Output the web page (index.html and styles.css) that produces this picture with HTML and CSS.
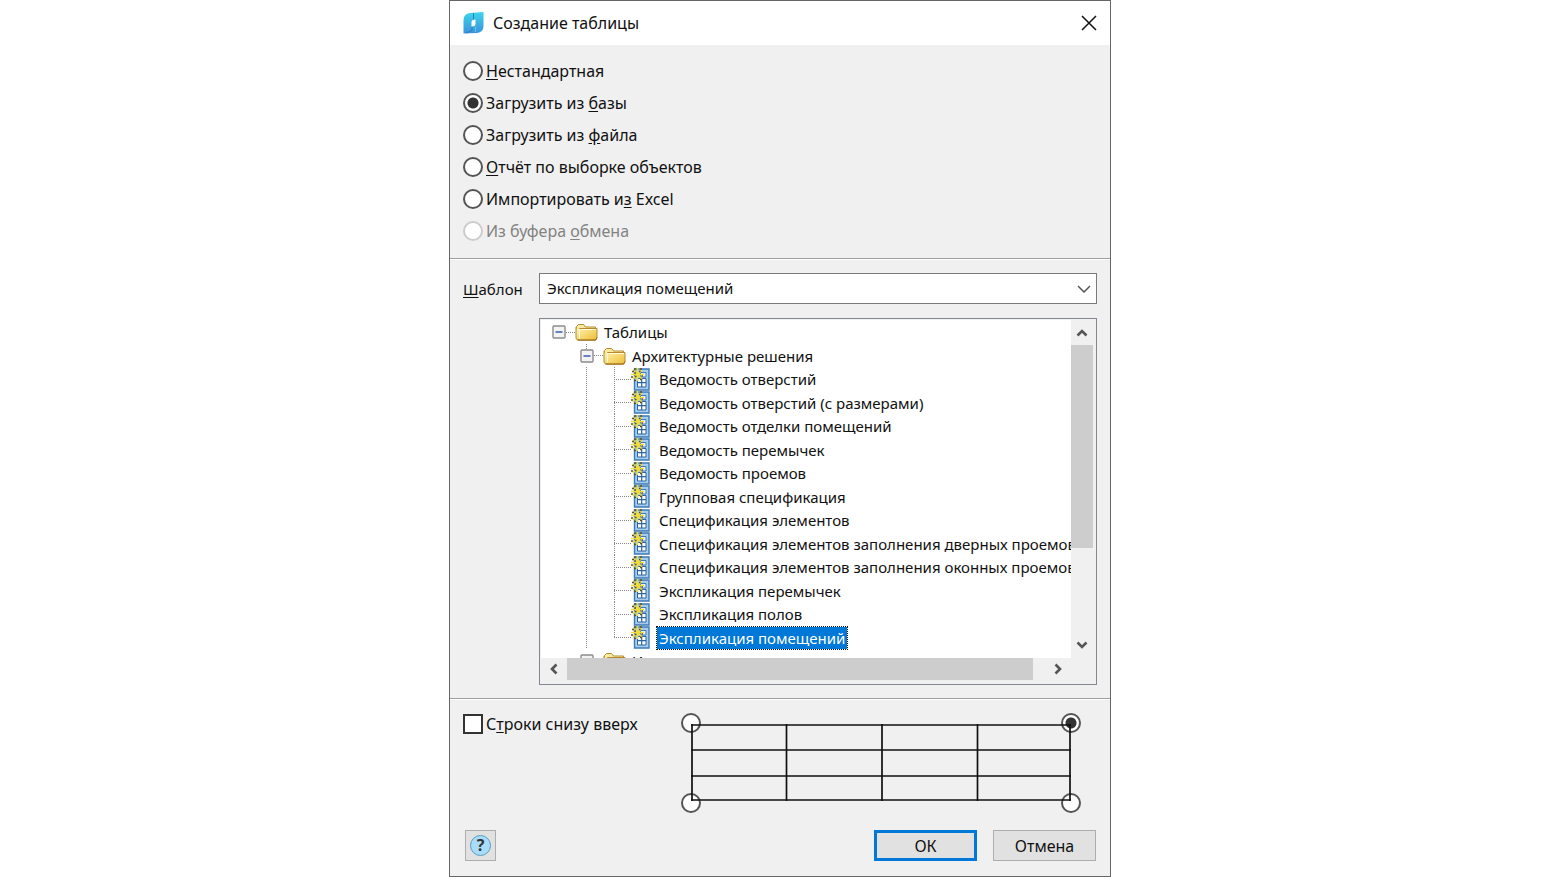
FILE: index.html
```html
<!doctype html>
<html lang="ru">
<head>
<meta charset="utf-8">
<meta name="viewport" content="width=device-width, initial-scale=1">
<title>Создание таблицы</title>
<link rel="stylesheet" href="styles.css">
</head>

<body>
<svg class="symbols" aria-hidden="true">
	<defs>
		<linearGradient id="gold" x1="0" y1="0" x2="1" y2="1"><stop offset="0" stop-color="#fff6b4"/><stop offset="1" stop-color="#eebd36"/></linearGradient>
		<linearGradient id="sky" x1="0" y1="0" x2="0" y2="1"><stop offset="0" stop-color="#3cd6ea"/><stop offset="1" stop-color="#3a92dc"/></linearGradient>
	</defs>
	<symbol id="folder" viewBox="0 0 23 18">
		<path d="M1.500 16V3.500L3.500 1.500H8.500L10.500 4H20.500V7" fill="#fae9a0" stroke="#b48a2c"/>
		<path d="M1 4V15.500L3 17.200H20.500L22 15V5.500H4.500V14" fill="url(#gold)" stroke="#b48a2c"/>
		<path d="M4.500 6V15.500M6 6.500H21" fill="none" stroke="#fffbdc"/>
		<path d="M2.500 17H20.500L22 14.500" fill="none" stroke="#94681a"/>
	</symbol>
	<symbol id="report" viewBox="0 0 20 23">
		<path d="M3.500 1H18V22H3.500Z" fill="#a5cdf0" stroke="#3f7ab4" stroke-width="1.400"/>
		<path d="M9.500 4.500H15V9H9.500Z" fill="#e7f4ff" stroke="#4379ad"/>
		<path d="M6.500 10.500H15V19H6.500Z" fill="#fff" stroke="#2d659f"/>
		<path d="M7 14.700H15M10.700 10.500V19" stroke="#2d659f" stroke-width="1.200"/>
		<path d="M6.500 0V13M0 6.500H13M2 2L11 11M11 2L2 11" stroke="#f2da38" stroke-width="1.600"/>
		<path d="M1 3.500H3M4 0V2M9 1H11M0 9H2M3 12.500H5M9 11.500H11M8 3.500H9.500M4 8.500H5.500M10.500 8H12M3.500 5H5" stroke="#5b5423" stroke-width="1.300"/>
	</symbol>
	<symbol id="minus" viewBox="0 0 14 14">
		<rect x="1" y="1" width="12" height="12" rx="1" fill="#f3f3f3" stroke="#8c8c8c" stroke-width="1.400"/>
		<path d="M3.500 7H10.500" stroke="#3c5bb0" stroke-width="1.500"/>
	</symbol>
	<symbol id="arrow" viewBox="0 0 12 12"><path d="M1.500 8.500L6 4L10.500 8.500" fill="none" stroke="#555" stroke-width="2.600"/></symbol>
</svg>

<main class="dialog">
	<header class="titlebar">
		<svg class="logo" viewBox="0 0 21 22">
			<path d="M0.500 21.500V8Q0.500 2 7 1L20.500 0V14Q20.500 20 14 21Z" fill="url(#sky)"/>
			<path d="M10.500 1V7.500M9 15V18.500L3 21" stroke="#2b80bb" stroke-width="1" fill="none"/>
			<path d="M12.500 14.500V20" stroke="#5fc4ee" stroke-width="1"/>
			<path d="M8.500 14.500V10Q8.500 7.500 12.500 7.500V12Q12.500 14.500 8.500 14.500Z" fill="#fff"/>
		</svg>
		<h1>Создание таблицы</h1>
		<button class="close" type="button" aria-label="Закрыть"><svg viewBox="0 0 16 16"><path d="M1 1L15 15M15 1L1 15" stroke="#111" stroke-width="1.500"/></svg></button>
	</header>

	<form>
		<div class="sources">
			<label><input type="radio" name="source"><span><u>Н</u>естандартная</span></label>
			<label><input type="radio" name="source" checked><span>Загрузить из <u>б</u>азы</span></label>
			<label><input type="radio" name="source"><span>Загрузить из <u>ф</u>айла</span></label>
			<label><input type="radio" name="source"><span><u>О</u>тчёт по выборке объектов</span></label>
			<label><input type="radio" name="source"><span>Импортировать и<u>з</u> Excel</span></label>
			<label class="off"><input type="radio" name="source" disabled><span>Из буфера <u>о</u>бмена</span></label>
		</div>

		<div class="template">
			<label for="template"><u>Ш</u>аблон</label>
			<div class="combo">
				<select id="template"><option>Экспликация помещений</option></select>
				<svg viewBox="0 0 14 8"><path d="M1 1L7 7L13 1" fill="none" stroke="#555" stroke-width="1.500"/></svg>
			</div>
			<div class="tree-box">
				<div class="tree-view">
					<ul class="tree">
						<li>
							<div class="row"><svg class="toggle"><use href="#minus"/></svg><i class="dots"></i><svg class="folder"><use href="#folder"/></svg><span class="name">Таблицы</span></div>
							<ul class="groups">
								<li>
									<div class="row"><svg class="toggle"><use href="#minus"/></svg><i class="dots"></i><svg class="folder"><use href="#folder"/></svg><span class="name">Архитектурные решения</span></div>
									<ul class="leaves">
										<li><i class="branch"></i><svg class="report"><use href="#report"/></svg><span class="name">Ведомость отверстий</span></li>
										<li><i class="branch"></i><svg class="report"><use href="#report"/></svg><span class="name">Ведомость отверстий (с размерами)</span></li>
										<li><i class="branch"></i><svg class="report"><use href="#report"/></svg><span class="name">Ведомость отделки помещений</span></li>
										<li><i class="branch"></i><svg class="report"><use href="#report"/></svg><span class="name">Ведомость перемычек</span></li>
										<li><i class="branch"></i><svg class="report"><use href="#report"/></svg><span class="name">Ведомость проемов</span></li>
										<li><i class="branch"></i><svg class="report"><use href="#report"/></svg><span class="name">Групповая спецификация</span></li>
										<li><i class="branch"></i><svg class="report"><use href="#report"/></svg><span class="name">Спецификация элементов</span></li>
										<li><i class="branch"></i><svg class="report"><use href="#report"/></svg><span class="name">Спецификация элементов заполнения дверных проемов</span></li>
										<li><i class="branch"></i><svg class="report"><use href="#report"/></svg><span class="name">Спецификация элементов заполнения оконных проемов</span></li>
										<li><i class="branch"></i><svg class="report"><use href="#report"/></svg><span class="name">Экспликация перемычек</span></li>
										<li><i class="branch"></i><svg class="report"><use href="#report"/></svg><span class="name">Экспликация полов</span></li>
										<li><i class="branch"></i><svg class="report"><use href="#report"/></svg><span class="name selected">Экспликация помещений</span></li>
									</ul>
								</li>
								<li>
									<div class="row"><svg class="toggle"><use href="#minus"/></svg><i class="dots"></i><svg class="folder"><use href="#folder"/></svg><span class="name">И</span></div>
								</li>
							</ul>
						</li>
					</ul>
				</div>
				<div class="scroll-y">
					<svg class="up"><use href="#arrow"/></svg>
					<div class="thumb"></div>
					<svg class="down"><use href="#arrow"/></svg>
				</div>
				<div class="scroll-x">
					<svg class="left"><use href="#arrow"/></svg>
					<div class="thumb"></div>
					<svg class="right"><use href="#arrow"/></svg>
				</div>
			</div>
		</div>

		<div class="bottom">
			<div class="options">
				<label><input type="checkbox"><span>С<u>т</u>роки снизу вверх</span></label>
				<div class="corners">
					<input type="radio" name="corner" aria-label="Слева сверху">
					<input type="radio" name="corner" aria-label="Справа сверху" checked>
					<input type="radio" name="corner" aria-label="Слева снизу">
					<input type="radio" name="corner" aria-label="Справа снизу">
					<svg viewBox="0 0 400 100"><path d="M10 12H390M10 37H390M10 63H390M10 87H390M11 11V88M105.500 11V88M201 11V88M296.500 11V88M389 11V88" stroke="#111" stroke-width="1.700"/></svg>
				</div>
			</div>
			<div class="buttons">
				<button class="help" type="button" aria-label="Справка"><span>?</span></button>
				<button class="ok" type="button">ОК</button>
				<button type="button">Отмена</button>
			</div>
		</div>
	</form>
</main>
</body>
</html>
```
FILE: styles.css
```css
*{box-sizing: border-box; padding: 0; margin: 0;}
body{background: #fff; color: #111; font: 16px/22px "Noto Sans", "Open Sans", sans-serif;}
ul{list-style: none;}
svg,i{display: block; flex: none;}
u{text-underline-offset: 2px;}
button,select{font: inherit; color: inherit;}
.symbols{position: absolute; width: 0; height: 0;}

.dialog{max-width: 662px; margin: 0 auto; border: 1px solid #666; background: #f0f0f0;}
.titlebar{display: flex; align-items: center; height: 44px; padding: 0 13px; background: #fff;}
.titlebar h1{flex: 1; margin-left: 9px; font-size: 16px; font-weight: normal;}
.logo{width: 21px; height: 22px;}
.close{border: 0; background: none;}
.close svg{width: 16px; height: 16px;}

label{white-space: nowrap;}
.sources label,.options label{display: flex; align-items: center; gap: 3px;}
input{appearance: none; flex: none; width: 20px; height: 20px; border: 2px solid #555; background: #fff;}
input[type=radio]{border-radius: 50%;}
input[type=radio]:checked{background: radial-gradient(circle, #333 5px, #fff 6px);}
input:disabled{border-color: #ccc;}
.off{color: #838383;}

.sources{padding: 10px 13px 11px;}
.sources label{height: 32px;}

.template{display: grid; grid-template-columns: 76px 1fr; row-gap: 14px; padding: 14px 13px 13px; border-top: 1px solid #a0a0a0; box-shadow: inset 0 1px #fff; font-size: 15px;}
.template > label{align-self: center;}
.combo{display: grid; align-items: center;}
.combo select{grid-area: 1/1; appearance: none; width: 100%; height: 31px; padding: 0 7px 2px; border: 1px solid #7a7a7a; border-radius: 0; background: #fff;}
.combo svg{grid-area: 1/1; justify-self: end; width: 14px; height: 8px; margin-right: 6px; pointer-events: none;}

.tree-box{grid-column: 2; display: grid; grid-template-columns: minmax(0,1fr) 22px; grid-template-rows: 338px 22px; padding: 1px 3px 4px 1px; border: 1px solid #828790; background: #f0f0f0;}
.tree-view{overflow: hidden; background: #fff;}
.tree{padding-left: 11px;}
.row,.leaves li{display: flex; align-items: center; height: 24px; white-space: nowrap;}
.groups .row{height: 23px;}
.leaves li:nth-child(even){height: 23px;}
.groups{padding-left: 28px; background: repeating-linear-gradient(#888 0 1px, transparent 1px 2px) 34px 0/1px 5px no-repeat;}
.toggle{width: 14px; height: 14px;}
.dots{width: 9px; height: 1px; background: repeating-linear-gradient(to right, #888 0 1px, transparent 1px 2px);}
.folder{width: 23px; height: 18px;}
.name{padding: 0 2px; margin-left: 4px;}
.leaves{padding-left: 34px; background: repeating-linear-gradient(#888 0 1px, transparent 1px 2px) 6px 0/1px 100% no-repeat;}
.branch{align-self: stretch; width: 17px; background: repeating-linear-gradient(#888 0 1px, transparent 1px 2px) 0 0/1px 100% no-repeat, repeating-linear-gradient(to right, #888 0 1px, transparent 1px 2px) 0 50%/100% 1px no-repeat;}
.leaves li:last-child .branch{background-size: 1px 50%, 100% 1px;}
.report{width: 20px; height: 23px;}
.leaves .name{margin-left: 6px;}
.selected{color: #fff; background: #0078d7; outline: 1px dotted #111;}

.scroll-y,.scroll-x{display: flex; align-items: center;}
.scroll-y{flex-direction: column;}
.scroll-y svg,.scroll-x svg{width: 12px; height: 12px;}
.thumb{background: #cdcdcd;}
.scroll-y .thumb{width: 22px; height: 60%;}
.scroll-x .thumb{width: 88%; height: 22px;}
.up{margin: 7px 0 6px;}
.down{margin: auto 0 7px; transform: rotate(180deg);}
.left{margin: 0 7px; transform: rotate(-90deg);}
.right{margin: 0 7px 0 auto; transform: rotate(90deg);}

.bottom{padding: 14px 13px 15px; border-top: 1px solid #a0a0a0; box-shadow: inset 0 1px #fff;}
.options{display: flex; justify-content: space-between; align-items: flex-start; padding-right: 16px;}
.options input[type=checkbox]{border-color: #333;}
input[type=checkbox]:checked{background: #333;}
.corners{display: grid; grid-template: 20px 20px / 20px 20px; justify-content: space-between; align-content: space-between; width: 400px; height: 100px;}
/* the grid lines run over the corner radios */
.corners svg{grid-area: 1/1/3/3; width: 100%; height: 100%; pointer-events: none;}
.corners input:nth-child(1){grid-area: 1/1;}
.corners input:nth-child(2){grid-area: 1/2;}
.corners input:nth-child(3){grid-area: 2/1;}
.corners input:nth-child(4){grid-area: 2/2;}

.buttons{display: flex; gap: 16px; margin-top: 17px; padding: 0 1px 0 2px;}
.buttons button{width: 103px; height: 31px; border: 1px solid #adadad; background: #e1e1e1;}
.buttons .ok{border: 3px solid #0078d7;}
.buttons .help{display: grid; place-items: center; width: 31px; margin-right: auto;}
.help span{width: 21px; height: 21px; border: 1px solid #5a9cbd; border-radius: 50%; background: #a9dcf8; color: #333; font-weight: bold; line-height: 19px;}
```
